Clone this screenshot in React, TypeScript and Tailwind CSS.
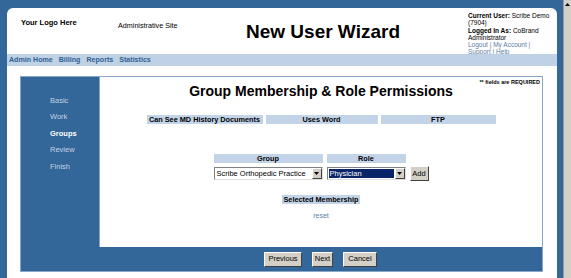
import React from "react"

const font = { fontFamily: '"Liberation Sans", Arial, sans-serif' }

export default function App() {
  return (
    <div className="flex h-[278px] w-[571px] overflow-hidden bg-[#336699] text-black" style={font}>
      <div className="flex flex-1 flex-col pl-[7px] pr-[6px] pt-[8px]">
        <div className="flex flex-1 flex-col rounded-t-[6px] bg-white">
          <Header />
          <nav className="flex h-[12px] items-center gap-[6px] bg-[#bfd1e5] pl-[2px] text-[7.1px] font-bold text-[#2f5f93]">
            <span>Admin Home</span>
            <span>Billing</span>
            <span>Reports</span>
            <span>Statistics</span>
          </nav>
          <Wizard />
        </div>
      </div>
      <Scrollbar />
    </div>
  )
}

function Header() {
  return (
    <div className="flex h-[46px]">
      <div className="w-[111px] pl-[14px] pt-[9px] text-[7.5px] font-bold">Your Logo Here</div>
      <div className="w-[128px] pt-[13px] text-[7.2px]">Administrative Site</div>
      <div className="w-[222px] pt-[13px] text-[19px] font-bold leading-[21px]">New User Wizard</div>
      <div className="pt-[4px] text-[6.5px] leading-[7.3px]">
        <div>
          <b>Current User:</b> Scribe Demo
        </div>
        <div>(7904)</div>
        <div>
          <b>Logged In As:</b> CoBrand
        </div>
        <div>Administrator</div>
        <div className="text-[#5b7ea5]">Logout | My Account |</div>
        <div className="text-[#5b7ea5]">Support | Help</div>
      </div>
    </div>
  )
}

function Wizard() {
  const steps = ["Basic", "Work", "Groups", "Review", "Finish"]
  return (
    <div className="ml-[13px] mr-[14px] mt-[10px] flex h-[196px] flex-col border border-[#8aa6c8] bg-[#336699]">
      <div className="flex h-[170px]">
        <div className="w-[78px] pl-[29px] pt-[16px]">
          {steps.map((s) => (
            <div
              key={s}
              className={`h-[16.4px] text-[7.5px] leading-[16px] ${
                s === "Groups" ? "font-bold text-white" : "text-[#c5d3e4]"
              }`}
            >
              {s}
            </div>
          ))}
        </div>
        <Panel />
      </div>
      <div className="flex flex-1 items-center justify-center gap-[10px] pl-[78px]">
        <Btn className="w-[38px]">Previous</Btn>
        <Btn className="w-[21px]">Next</Btn>
        <Btn className="w-[34px]">Cancel</Btn>
      </div>
    </div>
  )
}

function Panel() {
  return (
    <div className="flex flex-1 flex-col items-center border-l border-[#8aa6c8] bg-white">
      <div className="w-full pr-[2px] pt-[2px] text-right text-[5.5px] font-bold leading-[6px]">** fields are REQUIRED</div>
      <h1 className="-mt-[2px] text-[14px] font-bold leading-[16px]">Group Membership &amp; Role Permissions</h1>
      <div className="mt-[16px] flex gap-[3px] text-[7.3px] font-bold leading-[9px]">
        <div className="w-[116px] bg-[#c3d4e8] text-center">Can See MD History Documents</div>
        <div className="w-[112px] bg-[#c3d4e8] text-center">Uses Word</div>
        <div className="w-[115px] bg-[#c3d4e8] text-center">FTP</div>
      </div>
      <div className="mt-[30px] flex gap-[4px] text-[7.3px] font-bold leading-[9px]">
        <div className="w-[109px] bg-[#c3d4e8] text-center">Group</div>
        <div className="w-[79px] bg-[#c3d4e8] text-center">Role</div>
        <div className="w-[19px]" />
      </div>
      <div className="mt-[3px] flex items-center gap-[4px]">
        <Select width="w-[109px]" color="bg-white text-black" value="Scribe Orthopedic Practice" />
        <Select width="w-[79px]" color="bg-[#0a246a] text-white" value="Physician" />
        <Btn className="w-[19px]">Add</Btn>
      </div>
      <div className="mt-[14px] bg-[#c3d4e8] px-[1px] text-[7.3px] font-bold leading-[9px]">Selected Membership</div>
      <div className="mt-[7px] text-[7px] text-[#5b7ea5]">reset</div>
    </div>
  )
}

function Select({ width, color, value }: { width: string; color: string; value: string }) {
  return (
    <div
      className={`flex h-[13px] border border-t-[#808080] border-l-[#808080] border-b-[#e0e0e0] border-r-[#e0e0e0] bg-white ${width}`}
    >
      <div className="flex flex-1 items-center p-[1px]">
        <div className={`flex h-full flex-1 items-center pl-[1px] text-[7.5px] ${color}`}>{value}</div>
      </div>
      <div className="flex w-[10px] items-center justify-center border border-t-white border-l-white border-b-[#404040] border-r-[#404040] bg-[#d4d0c8]">
        <svg width="5" height="3" viewBox="0 0 5 3">
          <path d="M0 0h5L2.5 3z" fill="#000" />
        </svg>
      </div>
    </div>
  )
}

function Btn({ className, children }: { className: string; children: React.ReactNode }) {
  return (
    <div
      className={`flex h-[15px] items-center justify-center border border-t-white border-l-white border-b-[#404040] border-r-[#404040] bg-[#d4d0c8] text-[7.5px] ${className}`}
    >
      {children}
    </div>
  )
}

function Scrollbar() {
  return (
    <div className="flex w-[8px] flex-col border-l border-[#9a9a9a] bg-[#d4d0c8]">
      <div className="flex h-[8px] items-center justify-center">
        <svg width="5" height="3" viewBox="0 0 5 3">
          <path d="M0 3h5L2.5 0z" fill="#000" />
        </svg>
      </div>
    </div>
  )
}
